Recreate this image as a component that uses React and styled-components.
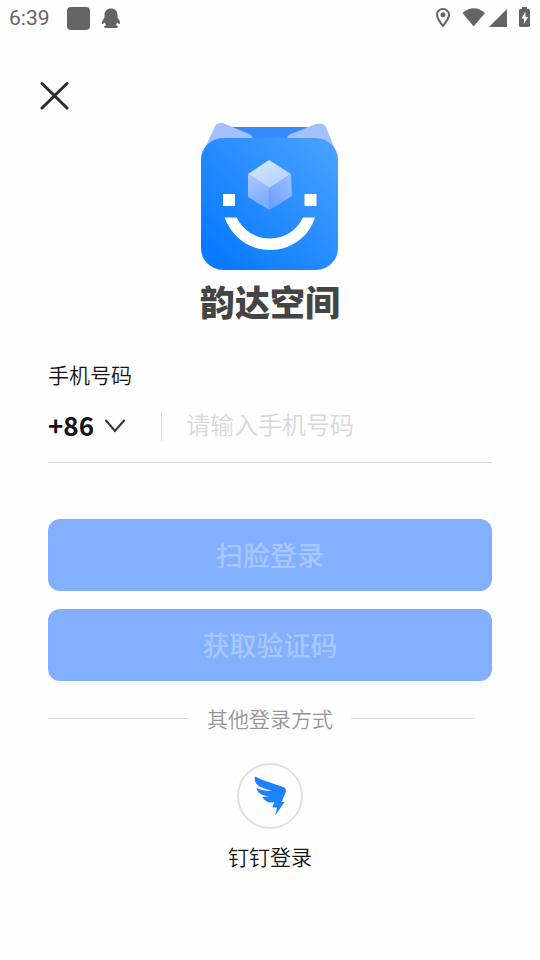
import React, { useState } from "react";
import styled, { createGlobalStyle } from "styled-components";

const GlobalStyle = createGlobalStyle`
  *, *::before, *::after { box-sizing: border-box; }
  body {
    margin: 0;
    background: #fefefe;
    color: #141414;
    font-family: "Noto Sans CJK SC", sans-serif;
    font-weight: 350;
  }
  button, input, select { font: inherit; color: inherit; }
`;

const Screen = styled.div`
  display: flex;
  flex-direction: column;
  min-height: 100vh;
`;

const StatusBar = styled.header`
  display: flex;
  align-items: center;
  justify-content: space-between;
  height: 36px;
  padding: 0 9px;
  color: #646464;
`;

const StatusGroup = styled.div`
  display: flex;
  align-items: center;
  gap: ${({ $gap }) => $gap}px;
`;

const Clock = styled.time`
  width: 42px;
  font-family: Roboto, sans-serif;
  font-size: 21px;
  font-weight: 400;
  line-height: 24px;
  white-space: nowrap;
`;

const AppSquare = styled.span`
  width: 23px;
  height: 23px;
  border-radius: 4px;
  background: #646464;
`;

const Icon = styled.svg`
  display: block;
  flex: none;
`;

const Toolbar = styled.nav`
  display: flex;
  padding: 42px 36px 0;
`;

const CloseButton = styled.button`
  display: grid;
  place-items: center;
  width: 36px;
  height: 36px;
  padding: 0;
  border: 0;
  background: none;
  cursor: pointer;
`;

const Main = styled.main`
  display: flex;
  flex-direction: column;
  padding: 0 48px 48px;
`;

const Brand = styled.div`
  display: flex;
  flex-direction: column;
  align-items: center;
  margin-top: 8px;
`;

const BrandName = styled.h1`
  margin: 11px 0 0;
  color: #444;
  font-size: 35px;
  font-weight: 900;
  line-height: 40px;
`;

const Form = styled.form`
  display: flex;
  flex-direction: column;
`;

const FieldLabel = styled.label`
  margin-top: 38px;
  align-self: flex-start;
  font-size: 21px;
  line-height: 30px;
`;

const PhoneRow = styled.div`
  display: flex;
  align-items: center;
  height: 74px;
  border-bottom: 1px solid #dcdcdc;
`;

const CodePicker = styled.div`
  display: grid;
  grid-template: 30px / 57px 20px;
  align-items: center;
  width: 114px;
  height: 30px;
  border-right: 1px solid #dcdcdc;
`;

const CodeSelect = styled.select`
  grid-column: 1 / 3;
  grid-row: 1;
  width: 100%;
  height: 40px;
  align-self: center;
  padding: 0 0 2px;
  border: 0;
  background: none;
  appearance: none;
  font-size: 26px;
  font-weight: 700;
  cursor: pointer;
`;

const Chevron = styled(Icon)`
  grid-column: 2;
  grid-row: 1;
  pointer-events: none;
`;

const PhoneInput = styled.input`
  flex: 1;
  min-width: 0;
  height: 48px;
  padding: 0 0 4px 24px;
  border: 0;
  outline: 0;
  background: none;
  font-size: 24px;
  &::placeholder { color: #d8d8d8; opacity: 1; }
`;

const Actions = styled.div`
  display: grid;
  gap: 18px;
  margin-top: 56px;
`;

const ActionButton = styled.button`
  height: 72px;
  padding: 0;
  border: 0;
  border-radius: 12px;
  background: #83afff;
  color: #a8c7ff;
  font-size: 27px;
  font-weight: 500;
  line-height: 40px;
`;

const Divider = styled.div`
  display: grid;
  grid-template-columns: 1fr auto 1fr;
  align-items: center;
  gap: 18px;
  margin-top: 22px;
  color: #969696;
  font-size: 21px;
  line-height: 30px;
`;

const Rule = styled.span`
  height: 1px;
  margin-right: ${({ $inset }) => $inset || 0}px;
  background: #dcdcdc;
`;

const DingButton = styled.button`
  display: flex;
  flex-direction: column;
  align-items: center;
  gap: 12px;
  align-self: center;
  margin-top: 30px;
  padding: 0;
  border: 0;
  background: none;
  font-size: 21px;
  line-height: 30px;
  cursor: pointer;
`;

const DingCircle = styled.span`
  display: grid;
  place-items: center;
  width: 66px;
  height: 66px;
  border: 2px solid #e0e0e0;
  border-radius: 50%;
`;

function Penguin() {
  return (
    <Icon width="18" height="20" viewBox="0 0 18 20" fill="currentColor" aria-hidden="true">
      <path d="M9 .5C5 .5 2.500 3.200 2.500 7v2.500C1 11.500 0 13 0 15c0 1 .6 1.200 1.200.8L3 14.500c.2 1.200.6 2 1.200 2.800-1.200.3-2 .8-2 1.500 0 .8.8 1.200 2 1.200h9.600c1.200 0 2-.4 2-1.200 0-.7-.8-1.200-2-1.500.6-.8 1-1.600 1.200-2.800l1.800 1.300c.6.4 1.200.2 1.200-.8 0-2-1-3.500-2.500-5.500V7C15.500 3.200 13 .5 9 .5z" />
    </Icon>
  );
}

function SystemIcons() {
  return (
    <Icon width="96" height="24" viewBox="0 0 96 24" fill="currentColor" role="img" aria-label="定位、无线网络、信号和充电状态">
      <path fillRule="evenodd" d="M8 2C4.100 2 1 5 1 8.800c0 4.800 7 12.700 7 12.700s7-7.900 7-12.700C15 5 11.900 2 8 2zm0 2c2.800 0 5 2.100 5 4.800 0 2.700-3 6.900-5 9.500-2-2.600-5-6.800-5-9.500C3 6.100 5.200 4 8 4z" />
      <circle cx="8" cy="8.800" r="2.500" />
      <path d="M27.500 7C34 .5 43.500.5 50 7L38.700 20.500z" />
      <path d="M54 21 72 3v18z" />
      <path fillRule="evenodd" d="M87 1h5v2h1.500c.8 0 1.500.5 1.500 1.200v15.600c0 .7-.7 1.200-1.500 1.200h-8c-.8 0-1.500-.5-1.500-1.200V4.200c0-.7.7-1.200 1.500-1.200H87zM90.500 5.500l-4 7h2.500v5.500l4-7h-2.500z" />
    </Icon>
  );
}

function Logo() {
  return (
    <Icon width="138" height="148" viewBox="0 0 138 148" role="img" aria-label="韵达空间">
      <defs>
        <linearGradient id="face" x1="0" y1="1" x2="1" y2="0">
          <stop offset="0.100" stopColor="#087aff" />
          <stop offset="1" stopColor="#4ba3ff" />
        </linearGradient>
        <linearGradient id="cubeTop" x1="0" y1="0" x2="0.600" y2="1">
          <stop offset="0" stopColor="#d8e9ff" />
          <stop offset="1" stopColor="#b5d0ff" />
        </linearGradient>
        <linearGradient id="cubeLeft" x1="0" y1="0" x2="0.300" y2="1">
          <stop offset="0" stopColor="#aecaff" />
          <stop offset="1" stopColor="#7babff" />
        </linearGradient>
        <linearGradient id="cubeRight" x1="0" y1="1" x2="1" y2="0">
          <stop offset="0" stopColor="#6a9cff" />
          <stop offset="1" stopColor="#9bc0ff" />
        </linearGradient>
      </defs>
      <path d="M30 5h78v15H30z" fill="#3689ff" />
      <path d="M1 33 13 6C15 1.500 18.500.3 23 1.500L48 12c3 1.500 4 3.500 4 7.500L20 36z" fill="#a3c0ff" />
      <path d="M136 33 125.500 6C123.500 1.500 119.500.8 114.500 2L90 12c-3.500 1.600-4.500 3.500-4 7l30 17z" fill="#a3c0ff" />
      <rect x="0" y="16" width="137" height="132" rx="22" fill="url(#face)" />
      <path d="M68 38 90 52 68.500 66 47 52z" fill="url(#cubeTop)" />
      <path d="M47 52 68.500 66v22L47 75z" fill="url(#cubeLeft)" />
      <path d="M90 52 68.500 66v22L91 74z" fill="url(#cubeRight)" />
      <path d="M22 72h12v12H22zM103.500 72h12v12h-12zM23.500 95.500h12C42 108 54 116.500 69 116.500S96 108 102 95.500h12C108 115 90 128 69 128S31 115 23.500 95.500z" fill="#fff" />
    </Icon>
  );
}

function Wing() {
  return (
    <Icon width="32" height="40" viewBox="0 0 32 40" fill="#1d82fe" aria-hidden="true">
      <path d="M1 .5C9 5 20 7.500 28.500 10.700 31.500 12 32.500 13.500 31.700 16 30.800 19 29 22.500 27.500 26H30.500L21.200 39.500l1.800-8h-4.500L20.300 26c-5 1.500-9.300-.3-12-5l7.700-1C10 20 4 18.500 2.500 12c5 2.300 10 3 15.500 2.800C10 12.800 3 10.500 1.300 6 .6 4 .5 2 1 .5z" />
    </Icon>
  );
}

export default function App() {
  const [phone, setPhone] = useState("");
  return (
    <Screen>
      <GlobalStyle />
      <StatusBar>
        <StatusGroup $gap={12}>
          <StatusGroup $gap={16}>
            <Clock>6:39</Clock>
            <AppSquare />
          </StatusGroup>
          <Penguin />
        </StatusGroup>
        <SystemIcons />
      </StatusBar>
      <Toolbar>
        <CloseButton type="button" aria-label="关闭">
          <Icon width="30" height="30" viewBox="0 0 30 30" fill="none" stroke="#2c2c2c" strokeWidth="3" strokeLinecap="round" aria-hidden="true">
            <path d="M3 2.500 28 27M28 2.500 3 27" />
          </Icon>
        </CloseButton>
      </Toolbar>
      <Main>
        <Brand>
          <Logo />
          <BrandName>韵达空间</BrandName>
        </Brand>
        <Form onSubmit={(e) => e.preventDefault()}>
          <FieldLabel htmlFor="phone">手机号码</FieldLabel>
          <PhoneRow>
            <CodePicker>
              <CodeSelect aria-label="国家代码" defaultValue="+86">
                <option>+86</option>
                <option>+852</option>
                <option>+853</option>
              </CodeSelect>
              <Chevron width="20" height="14" viewBox="0 0 20 14" fill="none" stroke="#333" strokeWidth="2" strokeLinecap="round" aria-hidden="true">
                <path d="M1 1.500 10 12 19 1.500" />
              </Chevron>
            </CodePicker>
            <PhoneInput id="phone" type="tel" placeholder="请输入手机号码" value={phone} onChange={(e) => setPhone(e.target.value)} />
          </PhoneRow>
          <Actions>
            <ActionButton type="button" disabled={!phone}>扫脸登录</ActionButton>
            <ActionButton type="submit" disabled={!phone}>获取验证码</ActionButton>
          </Actions>
        </Form>
        <Divider>
          <Rule />
          <span>其他登录方式</span>
          <Rule $inset={18} />
        </Divider>
        <DingButton type="button">
          <DingCircle>
            <Wing />
          </DingCircle>
          钉钉登录
        </DingButton>
      </Main>
    </Screen>
  );
}
